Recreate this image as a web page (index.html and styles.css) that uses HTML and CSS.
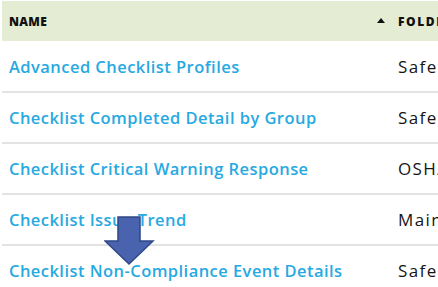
FILE: index.html
```html
<!DOCTYPE html>
<html>
<head>
<meta charset="utf-8">
<link rel="stylesheet" href="styles.css">
</head>
<body>
<div class="table">
  <div class="row head">
    <div class="cell name">NAME<span class="sort"></span></div>
    <div class="cell folder">FOLDER</div>
  </div>
  <div class="row first">
    <div class="cell name"><a>Advanced Checklist Profiles</a></div>
    <div class="cell folder">Safety</div>
  </div>
  <div class="row">
    <div class="cell name"><a>Checklist Completed Detail by Group</a></div>
    <div class="cell folder">Safety</div>
  </div>
  <div class="row">
    <div class="cell name"><a>Checklist Critical Warning Response</a></div>
    <div class="cell folder">OSHA</div>
  </div>
  <div class="row">
    <div class="cell name"><a>Checklist Issue Trend</a></div>
    <div class="cell folder">Maintenance</div>
  </div>
  <div class="row">
    <div class="cell name"><a>Checklist Non-Compliance Event Details</a></div>
    <div class="cell folder">Safety</div>
  </div>
</div>
<svg class="arrow" width="52" height="52" viewBox="0 0 52 52">
  <path d="M14 1 H36 V25 H49 L25 48 L1 25 H14 Z" fill="#4a63ae" stroke="#2e4787" stroke-width="1.5"/>
</svg>
</body>
</html>
```
FILE: styles.css
```css
html, body {
  margin: 0;
  padding: 0;
  background: #fff;
  overflow: hidden;
}
body {
  width: 438px;
  height: 287px;
  position: relative;
  font-family: "Open Sans", Lato, sans-serif;
}
.table {
  margin: 1px 0 0 2px;
  width: 436px;
  overflow: hidden;
}
.row {
  display: grid;
  grid-template-columns: 388px 1fr;
  height: 51px;
  border-bottom: 2px solid #e3e3e3;
  box-sizing: border-box;
  align-items: center;
}
.row.first {
  height: 52px;
}
.row.head {
  height: 40px;
  background: #e4edd3;
  border-bottom: none;
}
.cell {
  padding-left: 7px;
  white-space: nowrap;
  overflow: hidden;
}
.head .cell {
  font-weight: 800;
  font-size: 12px;
  letter-spacing: 0.3px;
  color: #111;
}
.head .folder {
  letter-spacing: 1.6px;
}
.head .name {
  position: relative;
  overflow: visible;
}
.sort {
  position: absolute;
  left: 375px;
  top: 5px;
  width: 0;
  height: 0;
  border-left: 4px solid transparent;
  border-right: 4px solid transparent;
  border-bottom: 5px solid #111;
}
.name a {
  color: #27a9e1;
  font-size: 16.5px;
  font-weight: 600;
  letter-spacing: 0.45px;
}
.folder {
  font-size: 17px;
  color: #151515;
  padding-left: 8px;
}
.row:not(.head) .folder {
  font-weight: 500;
  letter-spacing: 1.4px;
}
.arrow {
  position: absolute;
  left: 104px;
  top: 216px;
}
```
